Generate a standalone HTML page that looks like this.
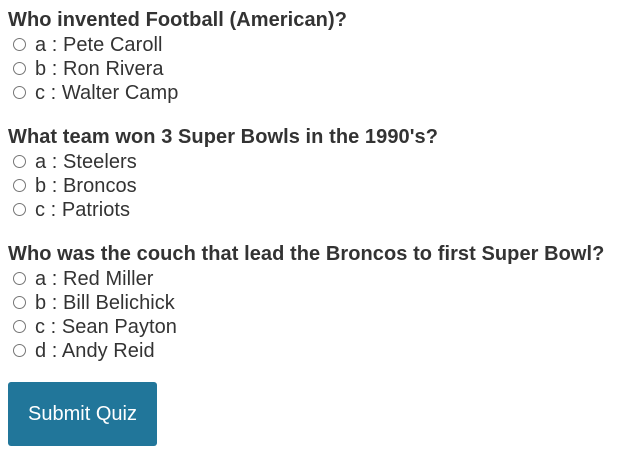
<!DOCTYPE html>
<html><head><style>
body{margin:8px;font-family:"Liberation Sans",sans-serif;color:#333;background:#fff}
.q{font-weight:bold;font-size:20px;line-height:25px;height:25px;margin:0;letter-spacing:0.07px}
.o{font-size:20px;line-height:24px;height:24px;position:relative;padding-left:27px;letter-spacing:0.05px}
.o:before{content:"";position:absolute;left:5px;top:5px;width:11px;height:11px;border:1px solid #767676;border-radius:50%;background:#fff}
.g{margin-bottom:20px}
.btn{display:block;margin-top:-1px;width:149px;height:64px;line-height:64px;text-align:center;background:#21769a;color:#fff;font-size:20px;border-radius:3px}
</style></head><body>
<div class="g"><div class="q">Who invented Football (American)?</div>
<div class="o">a : Pete Caroll</div><div class="o">b : Ron Rivera</div><div class="o">c : Walter Camp</div></div>
<div class="g"><div class="q">What team won 3 Super Bowls in the 1990's?</div>
<div class="o">a : Steelers</div><div class="o">b : Broncos</div><div class="o">c : Patriots</div></div>
<div class="g"><div class="q">Who was the couch that lead the Broncos to first Super Bowl?</div>
<div class="o">a : Red Miller</div><div class="o">b : Bill Belichick</div><div class="o">c : Sean Payton</div><div class="o">d : Andy Reid</div></div>
<div class="btn">Submit Quiz</div>
</body></html>
